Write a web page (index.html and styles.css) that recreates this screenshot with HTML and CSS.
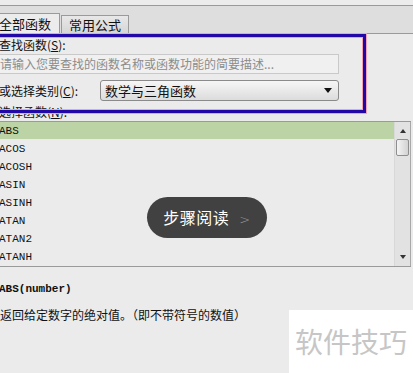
FILE: index.html
```html
<!DOCTYPE html>
<html lang="zh-CN">
<head>
  <meta charset="UTF-8" />
  <title>插入函数</title>
  <link rel="stylesheet" href="styles.css">
</head>
<body>
  <div class="dialog">
    <div class="titlebar"></div>
    <div class="tabbar">
      <div class="tab active">全部函数</div>
      <div class="tab">常用公式</div>
    </div>

    <div class="panel">
      <div class="label">查找函数(<u>S</u>):</div>
      <div class="search-input">请输入您要查找的函数名称或函数功能的简要描述...</div>

      <div class="category-row">
        <div class="label">或选择类别(<u>C</u>):</div>
        <div class="select">
          <span>数学与三角函数</span>
          <span class="select-arrow"></span>
        </div>
      </div>

      <div class="label list-label">选择函数(<u>N</u>):</div>

      <div class="func-list">
        <ul class="func-items">
          <li class="selected">ABS</li>
          <li>ACOS</li>
          <li>ACOSH</li>
          <li>ASIN</li>
          <li>ASINH</li>
          <li>ATAN</li>
          <li>ATAN2</li>
          <li>ATANH</li>
        </ul>
        <div class="scrollbar">
          <span class="arrow-up"></span>
          <span class="thumb"></span>
          <span class="track"></span>
          <span class="arrow-down"></span>
        </div>
      </div>

      <div class="func-sig">ABS(number)</div>
      <div class="func-desc">返回给定数字的绝对值。（即不带符号的数值）</div>
    </div>
  </div>

  <!-- annotation frame around the search area -->
  <div class="highlight-box"></div>

  <div class="step-pill">步骤阅读 <span class="chevron">&gt;</span></div>

  <div class="watermark">软件技巧</div>
</body>
</html>
```

FILE: styles.css
```css
body {
  margin: 0;
  width: 413px;
  height: 373px;
  overflow: hidden;
  position: relative;
  background-color: #ebebeb;
  font-family: "Noto Sans CJK SC", "Liberation Sans", sans-serif;
  font-size: 12px;
  color: #111;
}

.dialog {
  margin-left: -5px;
}

.titlebar {
  height: 5px;
  background: #ececec;
  border-bottom: 1px solid #9a9a9a;
}

.tabbar {
  height: 27px;
  background: #dedede;
  border-bottom: 1px solid #9a9a9a;
  display: flex;
  align-items: flex-end;
}

.tab {
  box-sizing: border-box;
  height: 18px;
  border: 1px solid #9a9a9a;
  border-bottom: none;
  background: linear-gradient(#e8e8e8, #d6d6d6);
  font-size: 13px;
  line-height: 17px;
  white-space: nowrap;
}

.tab.active {
  height: 20px;
  width: 65px;
  padding-left: 4px;
  background: #ececec;
  border-left: none;
  line-height: 20px;
}

.tab + .tab {
  margin-left: 1px;
  width: 68px;
  text-align: center;
}

.panel {
  padding-top: 4px;
}

.label {
  height: 14px;
  line-height: 14px;
  padding-left: 4px;
  white-space: nowrap;
}

.label u {
  text-decoration: underline;
}

.search-input {
  box-sizing: border-box;
  margin-top: 2px;
  width: 344px;
  height: 20px;
  padding-left: 4px;
  background: #f0f0f0;
  border: 1px solid #c9c9c9;
  line-height: 18px;
  color: #8c8c8c;
}

.category-row {
  margin-top: 6px;
  height: 21px;
  display: flex;
  align-items: center;
}

.category-row .label {
  width: 101px;
}

.select {
  box-sizing: border-box;
  width: 239px;
  height: 21px;
  padding: 0 6px 0 4px;
  border: 1px solid #8a8a8a;
  border-radius: 3px;
  background: linear-gradient(#f6f6f6, #dcdcdc);
  display: flex;
  align-items: center;
  justify-content: space-between;
  font-size: 13px;
}

.select-arrow {
  width: 0;
  height: 0;
  border-left: 4px solid transparent;
  border-right: 4px solid transparent;
  border-top: 5px solid #111;
}

.list-label {
  margin-top: 4px;
  margin-bottom: 2px;
}

.func-list {
  width: 416px;
  height: 144px;
  border-top: 1px solid #9a9a9a;
  border-bottom: 1px solid #9a9a9a;
  display: flex;
}

.func-items {
  flex: 1;
  list-style: none;
  margin: 0;
  padding: 0;
}

.func-items li {
  height: 18px;
  line-height: 18px;
  padding-left: 4px;
  font-family: "Liberation Mono", monospace;
  font-size: 11px;
}

.func-items li.selected {
  background: linear-gradient(#bcd3a6 0, #bcd3a6 17px, transparent 17px);
}

.scrollbar {
  width: 15px;
  background: #e2e2e2;
  border-left: 1px solid #d8d8d8;
  border-right: 1px solid #a8a8a8;
  display: flex;
  flex-direction: column;
  align-items: center;
}

.arrow-up, .arrow-down {
  width: 0;
  height: 0;
  border-left: 3px solid transparent;
  border-right: 3px solid transparent;
  margin: 7px 0;
}

.arrow-up {
  border-bottom: 4px solid #333;
}

.arrow-down {
  border-top: 4px solid #333;
}

.thumb {
  box-sizing: border-box;
  width: 13px;
  height: 17px;
  margin-top: -1px;
  border: 1px solid #8e8e8e;
  border-radius: 2px;
  background: linear-gradient(90deg, #f4f4f4, #d2d2d2);
}

.track {
  flex: 1;
}

.func-sig {
  margin-top: 14px;
  height: 16px;
  line-height: 16px;
  padding-left: 4px;
  font-family: "Liberation Mono", monospace;
  font-size: 11px;
  font-weight: bold;
}

.func-desc {
  margin-top: 10px;
  height: 16px;
  line-height: 16px;
  padding-left: 5px;
  white-space: nowrap;
}

.highlight-box {
  position: absolute;
  left: -10px;
  top: 34px;
  width: 370px;
  height: 73px;
  border: 3px solid #2208a6;
  box-shadow: 0 0 0 1px #f2a4b4, inset 0 0 0 1px #f2a4b4;
}

.step-pill {
  position: absolute;
  left: 147px;
  top: 197px;
  width: 120px;
  height: 41px;
  border-radius: 21px;
  background: #414141;
  color: #fff;
  font-size: 16px;
  line-height: 41px;
  text-align: center;
  letter-spacing: 0.5px;
}

.chevron {
  margin-left: 6px;
  color: #9a9a9a;
  font-family: "DejaVu Sans", sans-serif;
  font-size: 13px;
  font-weight: 200;
}

.watermark {
  position: absolute;
  left: 289px;
  top: 310px;
  width: 124px;
  height: 63px;
  background: #fff;
  color: #c6c6c6;
  font-size: 28px;
  line-height: 63px;
  text-align: center;
}
```
